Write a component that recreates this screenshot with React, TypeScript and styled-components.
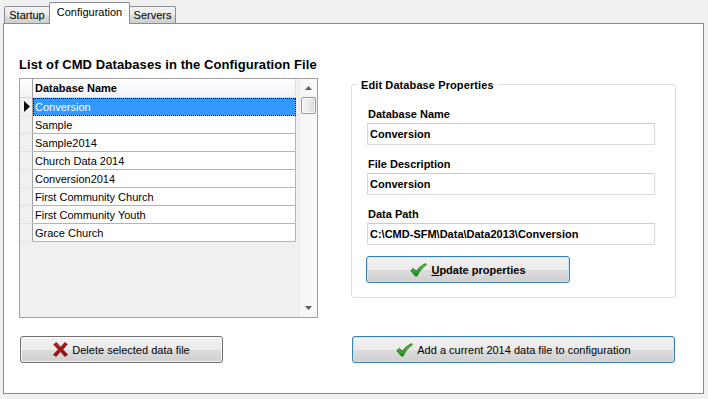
import React from "react";
import styled, { createGlobalStyle } from "styled-components";

const GlobalStyle = createGlobalStyle`
  html, body {
    margin: 0;
    padding: 0;
    background: #f0f0f0;
  }
  body {
    font-family: "Liberation Sans", Arial, sans-serif;
    font-size: 11px;
    color: #000;
  }
  * {
    box-sizing: border-box;
  }
`;

const Window = styled.div`
  width: 708px;
  height: 399px;
  padding-left: 3px;
  background: #f0f0f0;
  overflow: hidden;
`;

const TabStrip = styled.div`
  position: relative;
  z-index: 1;
  display: flex;
  align-items: flex-end;
  height: 23px;
  padding-left: 1px;
`;

const Tab = styled.div<{ $active?: boolean; $width: number }>`
  width: ${({ $width }) => $width}px;
  height: ${({ $active }) => ($active ? 22 : 17)}px;
  margin-left: ${({ $active }) => ($active ? -1 : 0)}px;
  margin-right: ${({ $active }) => ($active ? -1 : 0)}px;
  margin-bottom: ${({ $active }) => ($active ? -1 : 0)}px;
  position: relative;
  z-index: ${({ $active }) => ($active ? 2 : 1)};
  display: flex;
  align-items: center;
  justify-content: center;
  padding-bottom: ${({ $active }) => ($active ? 3 : 0)}px;
  border: 1px solid #898c95;
  border-bottom: none;
  border-radius: 2px 2px 0 0;
  background: ${({ $active }) =>
    $active
      ? "#ffffff"
      : "linear-gradient(#f3f3f3 0%, #ebebeb 50%, #dddddd 51%, #cfcfcf 100%)"};
  font-size: 11px;
  line-height: 13px;
  color: #000;
`;

const TabPanel = styled.div`
  width: 701px;
  height: 371px;
  border: 1px solid #898c95;
  background: #ffffff;
  padding: 33px 0 0 15px;
  display: grid;
  grid-template-columns: 299px 325px;
  grid-template-rows: 261px 27px;
  column-gap: 33px;
  row-gap: 18px;
`;

const Column = styled.div`
  display: flex;
  flex-direction: column;
`;

const SectionTitle = styled.div`
  font-size: 13px;
  font-weight: bold;
  line-height: 15px;
  letter-spacing: 0.08px;
  margin-bottom: 6px;
  white-space: nowrap;
`;

/* ---------- data grid ---------- */

const Grid = styled.div`
  height: 240px;
  border: 1px solid #a0a0a0;
  background: #f0f0f0;
  display: flex;
  justify-content: space-between;
`;

const GridBody = styled.div`
  width: 276px;
  display: flex;
  flex-direction: column;
`;

const GridRow = styled.div<{ $header?: boolean }>`
  display: flex;
  height: ${({ $header }) => ($header ? 19 : 18)}px;
  flex-shrink: 0;
`;

const RowHeader = styled.div<{ $header?: boolean }>`
  width: 13px;
  flex-shrink: 0;
  display: flex;
  align-items: center;
  padding-left: 4px;
  background: ${({ $header }) =>
    $header ? "linear-gradient(#ffffff, #f1f2f4)" : "#f0f0f0"};
  border-right: 1px solid #a0a0a0;
  border-bottom: 1px solid ${({ $header }) => ($header ? "#d5d5d5" : "#e4e4e4")};
`;

const HeaderCell = styled.div`
  flex: 1;
  display: flex;
  align-items: center;
  padding-left: 2px;
  font-weight: bold;
  background: linear-gradient(#ffffff, #f1f2f4);
  border-bottom: 1px solid #d5d5d5;
  border-right: 1px solid #e0e0e0;
`;

const Cell = styled.div<{ $selected?: boolean }>`
  flex: 1;
  display: flex;
  align-items: center;
  padding-left: 2px;
  background: ${({ $selected }) => ($selected ? "#3399ff" : "#ffffff")};
  color: ${({ $selected }) => ($selected ? "#ffffff" : "#000000")};
  border-right: 1px solid #b4b4b4;
  border-bottom: 1px solid #b4b4b4;
  outline: ${({ $selected }) => ($selected ? "1px dotted #000" : "none")};
  outline-offset: -1px;
  white-space: nowrap;
`;

const ScrollBar = styled.div`
  width: 18px;
  display: flex;
  flex-direction: column;
  align-items: center;
  background: #f7f7f7;
  border-left: 1px solid #ececec;
`;

const ScrollArrow = styled.div`
  height: 18px;
  width: 100%;
  flex-shrink: 0;
  display: flex;
  align-items: center;
  justify-content: center;
`;

const ScrollThumb = styled.div`
  width: 15px;
  height: 17px;
  flex-shrink: 0;
  border: 1px solid #979797;
  border-radius: 2px;
  background: linear-gradient(90deg, #f5f5f5 0%, #ececec 50%, #d8d8d8 100%);
  box-shadow: inset 0 0 0 1px rgba(255, 255, 255, 0.8);
`;

const ScrollTrack = styled.div`
  flex: 1;
`;

/* ---------- group box ---------- */

const GroupBox = styled.div`
  position: relative;
  margin-top: 27px;
  height: 214px;
  border: 1px solid #d5dfe5;
  border-radius: 3px;
  padding: 23px 0 0 15px;
  display: flex;
  flex-direction: column;
`;

const Legend = styled.span`
  position: absolute;
  top: -6px;
  left: 5px;
  padding: 0 4px 0 4px;
  background: #ffffff;
  font-weight: bold;
  line-height: 13px;
  letter-spacing: 0.1px;
  white-space: nowrap;
`;

const Field = styled.div`
  display: flex;
  flex-direction: column;
  & + & {
    margin-top: 13px;
  }
`;

const FieldLabel = styled.label`
  font-weight: bold;
  line-height: 13px;
  padding-left: 1px;
  margin-bottom: 2px;
`;

const TextBox = styled.input`
  width: 288px;
  height: 22px;
  border: 1px solid #d7dbe0;
  border-top-color: #c9ced4;
  background: #ffffff;
  padding: 0 0 0 2px;
  margin: 0;
  font-family: "Liberation Sans", Arial, sans-serif;
  font-size: 11px;
  font-weight: bold;
  color: #000;
  outline: none;
`;

/* ---------- buttons ---------- */

const Button = styled.button<{
  $primary?: boolean;
  $bold?: boolean;
  $width: number;
}>`
  width: ${({ $width }) => $width}px;
  height: 27px;
  padding: 0;
  display: flex;
  align-items: center;
  justify-content: center;
  gap: 4px;
  border: 1px solid ${({ $primary }) => ($primary ? "#3c7fb1" : "#707070")};
  border-radius: 3px;
  background: linear-gradient(#f2f2f2 0%, #ebebeb 50%, #dddddd 51%, #cfcfcf 100%);
  box-shadow: inset 0 0 0 1px
    ${({ $primary }) => ($primary ? "rgba(190, 230, 253, 0.9)" : "rgba(255, 255, 255, 0.75)")};
  font-family: "Liberation Sans", Arial, sans-serif;
  font-size: 11px;
  font-weight: ${({ $bold }) => ($bold ? "bold" : "normal")};
  color: #000;
  cursor: default;
`;

const LeftButton = styled(Button)`
  margin-left: 1px;
`;

const UpdateButton = styled(Button)`
  margin-top: 11px;
  margin-left: -1px;
`;

const Mnemonic = styled.span`
  text-decoration: underline;
`;

/* ---------- icons ---------- */

const RowArrow = () => (
  <svg width="6" height="11" viewBox="0 0 6 11">
    <path d="M0 0 L6 5.5 L0 11 Z" fill="#000" />
  </svg>
);

const UpGlyph = () => (
  <svg width="7" height="4" viewBox="0 0 7 4">
    <path d="M0 4 L3.5 0 L7 4 Z" fill="#5e5e5e" />
  </svg>
);

const DownGlyph = () => (
  <svg width="7" height="4" viewBox="0 0 7 4">
    <path d="M0 0 L7 0 L3.5 4 Z" fill="#5e5e5e" />
  </svg>
);

const CheckIcon = ({ id }: { id: string }) => (
  <svg width="17" height="14" viewBox="0 0 17 14">
    <defs>
      <linearGradient id={id} x1="0" y1="0" x2="0" y2="1">
        <stop offset="0" stopColor="#6fd84c" />
        <stop offset="1" stopColor="#17861b" />
      </linearGradient>
    </defs>
    <path
      d="M0.8 7.6 L3.4 5.4 L6.3 8.3 C8.8 5 11.8 2.3 15.6 0.6 L16.4 1.6 C12.6 4.2 9.6 7.8 7 13 L5.6 13.2 Z"
      fill={`url(#${id})`}
      stroke="#176a17"
      strokeWidth="0.9"
      strokeLinejoin="round"
    />
  </svg>
);

const CrossIcon = () => (
  <svg width="15" height="15" viewBox="0 0 15 15">
    <defs>
      <linearGradient id="crossFill" x1="0" y1="0" x2="1" y2="1">
        <stop offset="0" stopColor="#c42222" />
        <stop offset="1" stopColor="#7e0c0c" />
      </linearGradient>
    </defs>
    <path
      d="M0.6 2.4 L3.4 0.4 L7.6 5.2 L11.8 0.4 L14.4 2.2 L9.8 7.4 L14.6 12.8 L11.8 14.6 L7.4 9.6 L3.2 14.6 L0.4 12.8 L5.2 7.4 Z"
      fill="url(#crossFill)"
      stroke="#6e0a0a"
      strokeWidth="0.6"
      strokeLinejoin="round"
    />
  </svg>
);

const databases = [
  "Conversion",
  "Sample",
  "Sample2014",
  "Church Data 2014",
  "Conversion2014",
  "First Community Church",
  "First Community Youth",
  "Grace Church",
];

const fields = [
  { label: "Database Name", value: "Conversion" },
  { label: "File Description", value: "Conversion" },
  { label: "Data Path", value: "C:\\CMD-SFM\\Data\\Data2013\\Conversion" },
];

const App: React.FC = () => {
  const selected = 0;

  return (
    <Window>
      <GlobalStyle />
      <TabStrip>
        <Tab $width={46}>Startup</Tab>
        <Tab $active $width={81}>
          Configuration
        </Tab>
        <Tab $width={47}>Servers</Tab>
      </TabStrip>
      <TabPanel>
        <Column>
          <SectionTitle>List of CMD Databases in the Configuration File</SectionTitle>
          <Grid>
            <GridBody>
              <GridRow $header>
                <RowHeader $header />
                <HeaderCell>Database Name</HeaderCell>
              </GridRow>
              {databases.map((name, i) => (
                <GridRow key={name}>
                  <RowHeader>{i === selected && <RowArrow />}</RowHeader>
                  <Cell $selected={i === selected}>{name}</Cell>
                </GridRow>
              ))}
            </GridBody>
            <ScrollBar>
              <ScrollArrow>
                <UpGlyph />
              </ScrollArrow>
              <ScrollThumb />
              <ScrollTrack />
              <ScrollArrow>
                <DownGlyph />
              </ScrollArrow>
            </ScrollBar>
          </Grid>
        </Column>

        <Column>
          <GroupBox>
            <Legend>Edit Database Properties</Legend>
            {fields.map((f) => (
              <Field key={f.label}>
                <FieldLabel>{f.label}</FieldLabel>
                <TextBox readOnly defaultValue={f.value} />
              </Field>
            ))}
            <UpdateButton $primary $bold $width={204}>
              <CheckIcon id="checkUpdate" />
              <span>
                <Mnemonic>U</Mnemonic>pdate properties
              </span>
            </UpdateButton>
          </GroupBox>
        </Column>

        <LeftButton $width={203}>
          <CrossIcon />
          <span>Delete selected data file</span>
        </LeftButton>
        <LeftButton $primary $width={323}>
          <CheckIcon id="checkAdd" />
          <span>Add a current 2014 data file to configuration</span>
        </LeftButton>
      </TabPanel>
    </Window>
  );
};

export default App;
